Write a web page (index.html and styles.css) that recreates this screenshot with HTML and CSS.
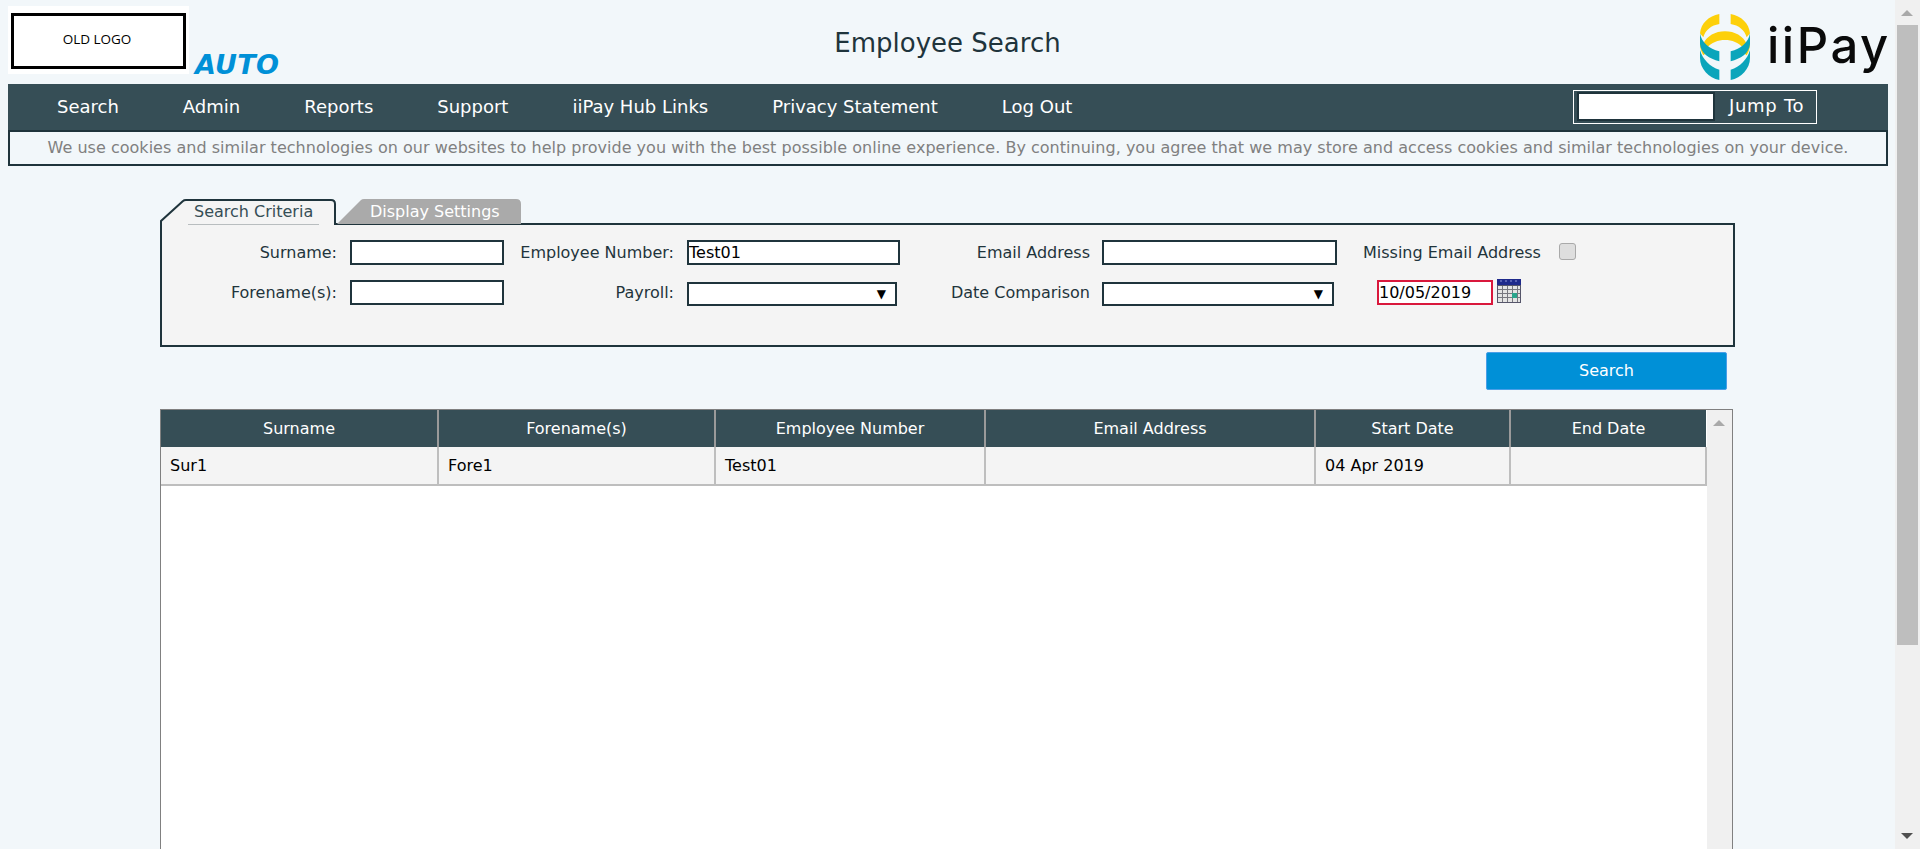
FILE: index.html
```html
<!DOCTYPE html>
<html lang="en">
<head>
  <meta charset="UTF-8">
  <title>Employee Search</title>
  <link rel="stylesheet" href="styles.css">
</head>
<body>
  <div class="page">
    <header class="top">
      <div class="brand">
        <div class="old-logo"><span>OLD LOGO</span></div>
        <span class="auto">AUTO</span>
      </div>
      <div class="page-title">Employee Search</div>
      <div class="iipay">
        <svg class="iipay-mark" viewBox="60 42 150 198" width="50" height="66">
          <path fill="#fdd00a" d="M118 42C86 48 63 70 60 100L70 112C76 90 94 76 118 72Z"/>
          <path fill="#fdd00a" d="M152 42C184 48 207 70 210 100L200 112C194 90 176 76 152 72Z"/>
          <path fill="#fdd00a" d="M70 132C80 108 106 94 135 94C164 94 190 108 200 132L188 142C176 128 156 120 135 120C114 120 94 128 82 142Z"/>
          <path fill="#fdd00a" d="M60 132C60 145 64 156 70 166L80 158L70 130Z"/>
          <path fill="#fdd00a" d="M210 132C210 145 206 156 200 166L190 158L200 130Z"/>
          <path fill="#0ba5bb" d="M60 100C64 126 88 148 118 154V184C88 176 62 160 60 132Z"/>
          <path fill="#0ba5bb" d="M210 100C206 126 182 148 152 154V184C182 176 208 160 210 132Z"/>
          <path fill="#0ba5bb" d="M60 150C68 178 90 201 118 209V240C86 234 60 206 60 174Z"/>
          <path fill="#0ba5bb" d="M210 150C202 178 180 201 152 209V240C184 234 210 206 210 174Z"/>
        </svg>
        <span class="iipay-name">iiPay</span>
      </div>
    </header>

    <nav class="menu">
      <a>Search</a>
      <a>Admin</a>
      <a>Reports</a>
      <a>Support</a>
      <a>iiPay Hub Links</a>
      <a>Privacy Statement</a>
      <a>Log Out</a>
      <div class="jump">
        <input class="jump-input">
        <span>Jump To</span>
      </div>
    </nav>
    <div class="cookies">We use cookies and similar technologies on our websites to help provide you with the best possible online experience. By continuing, you agree that we may store and access cookies and similar technologies on your device.</div>

    <main class="content">
      <div class="tabs">
        <div class="tab tab-on">
          <svg class="tab-shape" viewBox="0 0 177 26" preserveAspectRatio="none">
            <path d="M1 26V22L23 2Q24 1 26 1H171Q175 1 175 5V26" fill="#f4f4f4" stroke="#1f343c" stroke-width="2"/>
          </svg>
          <span class="tab-text">Search Criteria</span>
        </div>
        <div class="tab tab-off">
          <svg class="tab-shape" viewBox="0 0 184 26" preserveAspectRatio="none">
            <path d="M0 25L24 1Q25 0 27 0H179Q184 0 184 5V25Z" fill="#aaaaaa"/>
          </svg>
          <span class="tab-text">Display Settings</span>
        </div>
      </div>

      <form class="criteria">
        <label class="lbl">Surname:</label>
        <input class="box">
        <label class="lbl lbl-b">Employee Number:</label>
        <input class="box" value="Test01">
        <label class="lbl lbl-c">Email Address</label>
        <input class="box">
        <div class="extra">
          <label class="missing">Missing Email Address</label>
          <span class="check"></span>
        </div>

        <label class="lbl">Forename(s):</label>
        <input class="box">
        <label class="lbl lbl-b">Payroll:</label>
        <div class="pick pick-b">▼</div>
        <label class="lbl lbl-c">Date Comparison</label>
        <div class="pick pick-c">▼</div>
        <div class="extra">
          <input class="box date" value="10/05/2019">
          <svg class="cal" viewBox="0 0 24 24" width="24" height="24">
            <rect width="24" height="24" fill="#55556a"/>
            <rect width="24" height="6" fill="#1f2a8c"/>
            <path d="M3 2H5M8 2H10M13 2H15M18 2H20" stroke="#8f95d8" stroke-width="1"/>
            <rect x="1" y="7" width="22" height="16" fill="#e4e4e4"/>
            <path d="M5.500 7V23M10.500 7V23M15.500 7V23M20.500 7V23M1 10.500H23M1 14.500H23M1 18.500H23" stroke="#77777f" stroke-width="1"/>
            <rect x="15" y="14" width="5" height="5" fill="#2aa58c"/>
          </svg>
        </div>
      </form>

      <div class="actions">
        <button class="go" type="button">Search</button>
      </div>

      <div class="results">
        <div class="results-body">
          <table class="grid">
            <colgroup>
              <col class="c1"><col class="c2"><col class="c3"><col class="c4"><col class="c5"><col class="c6">
            </colgroup>
            <tr>
              <th>Surname</th><th>Forename(s)</th><th>Employee Number</th><th>Email Address</th><th>Start Date</th><th>End Date</th>
            </tr>
            <tr>
              <td>Sur1</td><td>Fore1</td><td>Test01</td><td></td><td>04 Apr 2019</td><td></td>
            </tr>
          </table>
        </div>
        <div class="inner-bar"><i class="up"></i></div>
      </div>
    </main>
  </div>

  <div class="page-bar">
    <i class="up"></i>
    <div class="thumb"></div>
    <i class="down"></i>
  </div>
</body>
</html>
```

FILE: styles.css
```css
html, body { height: 100%; margin: 0; overflow: hidden; }
body {
  display: flex;
  background-color: #f2f7fa;
  color: #1f343c;
  font-family: "DejaVu Sans", Verdana, sans-serif;
  font-size: 16px;
}
.page { flex: 1; min-width: 0; display: flex; flex-direction: column; height: 849px; }

/* header */
.top { position: relative; height: 84px; display: flex; justify-content: center; }
.brand { position: absolute; left: 8px; top: 6px; display: flex; align-items: flex-end; }
.old-logo {
  width: 181px;
  height: 68px;
  padding: 7px 3px 5px;
  box-sizing: border-box;
  background-color: white;
}
.old-logo span {
  display: flex;
  align-items: center;
  justify-content: center;
  height: 100%;
  box-sizing: border-box;
  padding-bottom: 4px;
  padding-right: 3px;
  border: 3px solid black;
  color: black;
  font-family: "Open Sans", sans-serif;
  font-size: 13.500px;
}
.auto {
  margin-left: 6px;
  margin-bottom: -6px;
  color: #0090d7;
  font-size: 27px;
  font-weight: bold;
  font-style: italic;
  line-height: 30px;
  letter-spacing: 0.300px;
}
.page-title { margin-top: 27px; font-size: 26px; line-height: 32px; }
.iipay { position: absolute; left: 1700px; top: 14px; display: flex; }
.iipay-name {
  margin-left: 17px;
  margin-top: 3px;
  color: #0a0a0a;
  font-family: Inter, sans-serif;
  font-size: 49px;
  font-weight: 500;
  line-height: 58px;
  letter-spacing: 2.500px;
}

/* menu */
.menu {
  display: flex;
  align-items: center;
  height: 46px;
  margin: 0 7px 0 8px;
  padding-left: 17px;
  background-color: #364e56;
  color: white;
  font-size: 18px;
}
.menu a { padding: 0 32px 2px; white-space: nowrap; }
.jump {
  display: flex;
  align-items: center;
  margin-left: auto;
  margin-right: 71px;
  margin-bottom: 1px;
  width: 244px;
  height: 34px;
  box-sizing: border-box;
  border: 1px solid white;
  padding-left: 3px;
}
.jump-input {
  width: 138px;
  height: 29px;
  box-sizing: border-box;
  padding: 0;
  border: 2px solid #1f343c;
  background-color: white;
}
.jump span { margin-left: 14px; padding-bottom: 2px; letter-spacing: 0.700px; white-space: nowrap; }
.cookies {
  height: 36px;
  margin: 0 7px 0 8px;
  box-sizing: border-box;
  border: 2px solid #1f343c;
  color: #808080;
  line-height: 32px;
  letter-spacing: 0.020px;
  text-align: center;
  white-space: nowrap;
}

/* tabs and form */
.content {
  flex: 1;
  min-height: 0;
  display: flex;
  flex-direction: column;
  margin: 33px 0 0 160px;
  width: 1575px;
}
.tabs { display: flex; height: 25px; position: relative; z-index: 1; margin-bottom: -1px; }
.tab { position: relative; height: 26px; }
.tab-on { width: 177px; }
.tab-off { width: 184px; }
.tab-shape { position: absolute; left: 0; top: 0; width: 100%; height: 100%; }
.tab-text { position: relative; display: block; line-height: 26px; white-space: nowrap; }
.tab-on .tab-text { margin-left: 34px; color: #364e56; }
.tab-on::after {
  content: "";
  position: absolute;
  left: 28px;
  top: 25px;
  width: 131px;
  height: 1px;
  background-color: #b8bdbf;
}
.tab-off .tab-text { margin-left: 33px; color: white; }

.criteria {
  display: grid;
  grid-template-columns: 188px 154px 183px 213px 202px 235px 1fr;
  grid-auto-rows: 25px;
  row-gap: 15px;
  align-items: start;
  height: 124px;
  box-sizing: border-box;
  padding: 15px 0 0 0;
  border: 2px solid #1f343c;
  background-color: #f4f4f4;
}
.lbl { padding-right: 13px; line-height: 26px; text-align: right; white-space: nowrap; }
.lbl-b { padding-right: 13px; }
.lbl-c { padding-right: 12px; }
.box {
  width: 100%;
  height: 25px;
  box-sizing: border-box;
  padding: 0;
  border: 2px solid #1f343c;
  background-color: white;
  color: black;
  font-family: inherit;
  font-size: 16px;
}
.pick {
  height: 24px;
  margin-top: 2px;
  box-sizing: border-box;
  border: 2px solid #1f343c;
  background-color: white;
  color: black;
  font-size: 12px;
  line-height: 20px;
  text-align: right;
  padding-right: 9px;
}
.pick-b { width: 210px; }
.pick-c { width: 232px; }
.extra { display: flex; align-items: flex-start; }
.missing { margin-left: 26px; line-height: 26px; white-space: nowrap; }
.check {
  width: 15px;
  height: 15px;
  margin: 3px 0 0 18px;
  border: 1px solid #a9a9a9;
  border-radius: 3px;
  background-color: #dedede;
}
.date { width: 116px; margin-left: 40px; border-color: #d9183c; }
.cal { margin-left: 4px; margin-top: -1px; }

.actions { display: flex; justify-content: flex-end; padding: 5px 8px 19px 0; }
.go {
  width: 241px;
  height: 38px;
  padding: 0 0 2px;
  border: 1px solid #4a9fe8;
  border-radius: 2px;
  background-color: #0090d7;
  color: white;
  font-family: inherit;
  font-size: 16px;
}

/* results */
.results {
  flex: 1;
  min-height: 0;
  display: flex;
  width: 1573px;
  box-sizing: border-box;
  border: 1px solid #808080;
  border-bottom: none;
  background-color: white;
}
.results-body { flex: 1; min-width: 0; }
.inner-bar { width: 25px; position: relative; background-color: #f0f0f0; margin-left: 1px; }
.grid { border-collapse: collapse; table-layout: fixed; width: 1545px; font-size: 16px; }
.c1 { width: 277px; }
.c2 { width: 277px; }
.c3 { width: 270px; }
.c4 { width: 330px; }
.c5 { width: 195px; }
.c6 { width: 196px; }
th {
  height: 36px;
  padding: 0 0 1px;
  background-color: #364e56;
  border-right: 2px solid #9a9a9a;
  color: white;
  font-weight: normal;
}
th:last-child { border-right: none; }
td {
  height: 38px;
  box-sizing: border-box;
  padding: 0 0 0 9px;
  background-color: #f4f4f4;
  border-right: 2px solid #bebebe;
  border-bottom: 2px solid #bebebe;
  color: black;
}

/* scrollbars */
.page-bar {
  position: relative;
  flex: none;
  width: 25px;
  height: 849px;
  background-color: #f0f0f0;
}
.thumb {
  position: absolute;
  left: 2px;
  top: 25px;
  width: 21px;
  height: 620px;
  background-color: #bebebe;
}
.up, .down {
  position: absolute;
  left: 6px;
  width: 0;
  height: 0;
  border-left: 6px solid transparent;
  border-right: 6px solid transparent;
}
.up { top: 10px; border-bottom: 6px solid #a9a9a9; }
.down { bottom: 10px; border-top: 6px solid #505050; }
```
